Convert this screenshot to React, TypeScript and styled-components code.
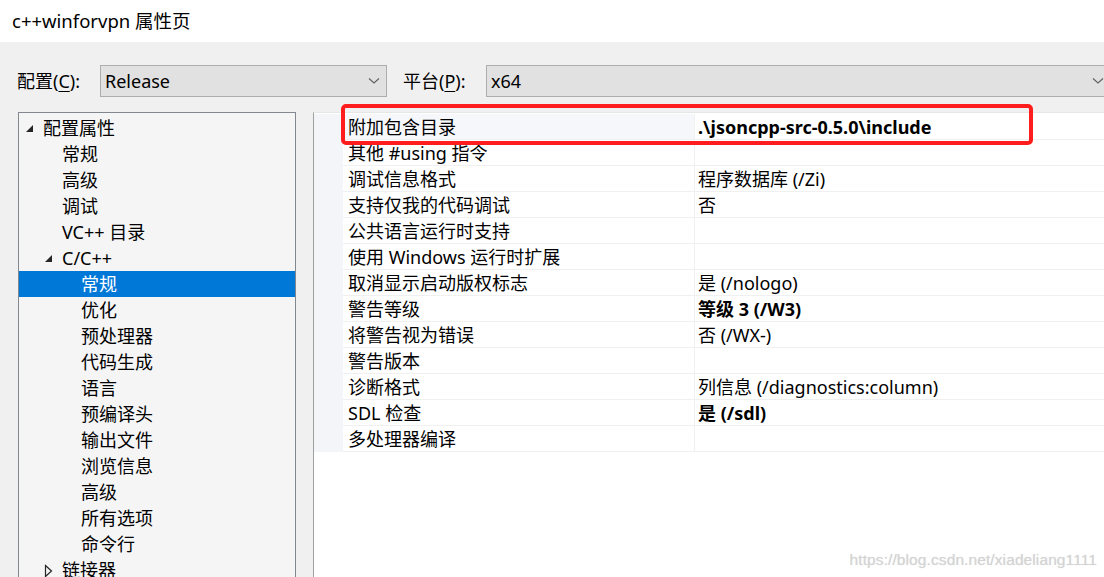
import React from 'react';
import styled, { createGlobalStyle } from 'styled-components';

const GlobalStyle = createGlobalStyle`
  html, body {
    margin: 0;
    padding: 0;
    width: 1104px;
    height: 577px;
    overflow: hidden;
    background: #f0f0f0;
  }
  body {
    font-family: "Noto Sans", "Noto Sans CJK SC", sans-serif;
    color: #000;
  }
`;

const uiFont = `"Noto Sans", "Noto Sans CJK SC", sans-serif`;

type TreeItem = { label: string; level: number; expander?: 'open' | 'closed'; selected?: boolean };

const treeItems: TreeItem[] = [
  { label: '配置属性', level: 0, expander: 'open' },
  { label: '常规', level: 1 },
  { label: '高级', level: 1 },
  { label: '调试', level: 1 },
  { label: 'VC++ 目录', level: 1 },
  { label: 'C/C++', level: 1, expander: 'open' },
  { label: '常规', level: 2, selected: true },
  { label: '优化', level: 2 },
  { label: '预处理器', level: 2 },
  { label: '代码生成', level: 2 },
  { label: '语言', level: 2 },
  { label: '预编译头', level: 2 },
  { label: '输出文件', level: 2 },
  { label: '浏览信息', level: 2 },
  { label: '高级', level: 2 },
  { label: '所有选项', level: 2 },
  { label: '命令行', level: 2 },
  { label: '链接器', level: 1, expander: 'closed' },
];

type Prop = { name: string; value?: string; bold?: boolean; current?: boolean };

const props: Prop[] = [
  { name: '附加包含目录', value: '.\\jsoncpp-src-0.5.0\\include', bold: true, current: true },
  { name: '其他 #using 指令' },
  { name: '调试信息格式', value: '程序数据库 (/Zi)' },
  { name: '支持仅我的代码调试', value: '否' },
  { name: '公共语言运行时支持' },
  { name: '使用 Windows 运行时扩展' },
  { name: '取消显示启动版权标志', value: '是 (/nologo)' },
  { name: '警告等级', value: '等级 3 (/W3)', bold: true },
  { name: '将警告视为错误', value: '否 (/WX-)' },
  { name: '警告版本' },
  { name: '诊断格式', value: '列信息 (/diagnostics:column)' },
  { name: 'SDL 检查', value: '是 (/sdl)', bold: true },
  { name: '多处理器编译' },
];

const Page = styled.div`
  position: relative;
  width: 1104px;
  height: 577px;
  overflow: hidden;
  background: #f0f0f0;
`;

const TitleBar = styled.div`
  height: 42px;
  background: #fff;
  display: flex;
  align-items: center;
  padding-left: 12px;
  padding-bottom: 3px;
  box-sizing: border-box;
  font-family: ${uiFont};
  font-size: 18.5px;
  color: #000;
`;

const Toolbar = styled.div`
  display: flex;
  align-items: center;
  padding: 23px 0 0 17px;
  height: 32px;
  box-sizing: content-box;
`;

const FieldLabel = styled.span<{ $width: number }>`
  width: ${(p) => p.$width}px;
  flex: none;
  font-family: ${uiFont};
  font-size: 18px;
  line-height: 32px;
  white-space: nowrap;
  u {
    text-decoration: underline;
    text-underline-offset: 3px;
  }
`;

const Select = styled.div<{ $width: number }>`
  width: ${(p) => p.$width}px;
  height: 32px;
  box-sizing: border-box;
  flex: none;
  background: #e1e1e1;
  border: 1px solid #adadad;
  display: flex;
  align-items: center;
  justify-content: space-between;
  padding: 0 6px 0 4px;
  font-family: ${uiFont};
  font-size: 18px;
  margin-right: 16px;
`;

const Content = styled.div`
  display: flex;
  gap: 17px;
  margin-top: 15px;
  padding-left: 18px;
`;

const TreePanel = styled.div`
  width: 278px;
  height: 480px;
  flex: none;
  box-sizing: border-box;
  border: 1px solid #828790;
  background: #f5f5f5;
  padding-top: 2px;
`;

const TreeRow = styled.div<{ $level: number; $selected?: boolean }>`
  height: 26px;
  display: flex;
  align-items: center;
  padding-left: ${(p) => 24 + p.$level * 19}px;
  position: relative;
  background: ${(p) => (p.$selected ? '#0078d7' : 'transparent')};
  color: ${(p) => (p.$selected ? '#fff' : '#000')};
  font-family: ${uiFont};
  font-size: 18px;
  line-height: 26px;
  white-space: nowrap;
`;

const Expander = styled.span`
  position: absolute;
  left: -20px;
  top: 7px;
  width: 12px;
  height: 12px;
  display: flex;
`;

const TreeLabel = styled.span`
  position: relative;
`;

const GridPanel = styled.div`
  flex: 1;
  min-width: 820px;
  height: 480px;
  box-sizing: border-box;
  background: #fff;
  border-left: 1px solid #a0a0a0;
  border-top: 1px solid #e6e6e6;
  padding-top: 1px;
`;

const GridRow = styled.div`
  display: flex;
  height: 26px;
`;

const Gutter = styled.div`
  width: 29px;
  flex: none;
  background: #f3f5f9;
`;

const NameCell = styled.div<{ $current?: boolean }>`
  width: 352px;
  flex: none;
  box-sizing: border-box;
  padding: 2px 0 0 5px;
  border-bottom: 1px solid #f0f0f0;
  border-right: 1px solid #f0f0f0;
  background: ${(p) => (p.$current ? '#f5f7fa' : '#fff')};
  font-family: ${uiFont};
  font-size: 18px;
  line-height: 23px;
  white-space: nowrap;
`;

const ValueCell = styled.div<{ $bold?: boolean }>`
  flex: 1;
  box-sizing: border-box;
  padding: 2px 0 0 3px;
  border-bottom: 1px solid #f0f0f0;
  font-family: ${uiFont};
  font-size: 18px;
  font-weight: ${(p) => (p.$bold ? 700 : 400)};
  line-height: 23px;
  white-space: nowrap;
`;

const GridFiller = styled.div`
  display: flex;
  height: 100%;
`;

const Highlight = styled.div`
  position: absolute;
  left: 341px;
  top: 104px;
  width: 692px;
  height: 41px;
  box-sizing: border-box;
  border: 4px solid #ff1d1d;
  border-radius: 5px;
  pointer-events: none;
`;

const Watermark = styled.div`
  position: absolute;
  right: 7px;
  bottom: 8px;
  font-family: "Liberation Sans", Arial, sans-serif;
  font-size: 15.5px;
  color: #d4d4d4;
  text-shadow: 0 0 1px rgba(160, 160, 160, 0.35);
  letter-spacing: 0.1px;
`;

const Chevron = () => (
  <svg width="12" height="8" viewBox="0 0 12 8">
    <path d="M1 1.5 L6 6 L11 1.5" fill="none" stroke="#606060" strokeWidth="1.1" />
  </svg>
);

const OpenTriangle = () => (
  <svg width="12" height="12" viewBox="0 0 12 12">
    <path d="M3 10 L10 10 L10 3 Z" fill="#262626" />
  </svg>
);

const ClosedTriangle = () => (
  <svg width="12" height="14" viewBox="0 0 12 14">
    <path d="M3.5 1.5 L9.5 7 L3.5 12.5 Z" fill="none" stroke="#262626" strokeWidth="1.2" />
  </svg>
);

export default function App() {
  return (
    <Page>
      <GlobalStyle />
      <TitleBar>c++winforvpn 属性页</TitleBar>
      <Toolbar>
        <FieldLabel $width={83}>
          配置(<u>C</u>):
        </FieldLabel>
        <Select $width={287}>
          <span>Release</span>
          <Chevron />
        </Select>
        <FieldLabel $width={83}>
          平台(<u>P</u>):
        </FieldLabel>
        <Select $width={625}>
          <span>x64</span>
          <Chevron />
        </Select>
      </Toolbar>
      <Content>
        <TreePanel>
          {treeItems.map((item, i) => (
            <TreeRow key={i} $level={item.level} $selected={item.selected}>
              <TreeLabel>
                {item.expander && (
                  <Expander>{item.expander === 'open' ? <OpenTriangle /> : <ClosedTriangle />}</Expander>
                )}
                {item.label}
              </TreeLabel>
            </TreeRow>
          ))}
        </TreePanel>
        <GridPanel>
          {props.map((p, i) => (
            <GridRow key={i}>
              <Gutter />
              <NameCell $current={p.current}>{p.name}</NameCell>
              <ValueCell $bold={p.bold}>{p.value ?? ''}</ValueCell>
            </GridRow>
          ))}
          <GridFiller />
        </GridPanel>
      </Content>
      <Highlight />
      <Watermark>https://blog.csdn.net/xiadeliang1111</Watermark>
    </Page>
  );
}
